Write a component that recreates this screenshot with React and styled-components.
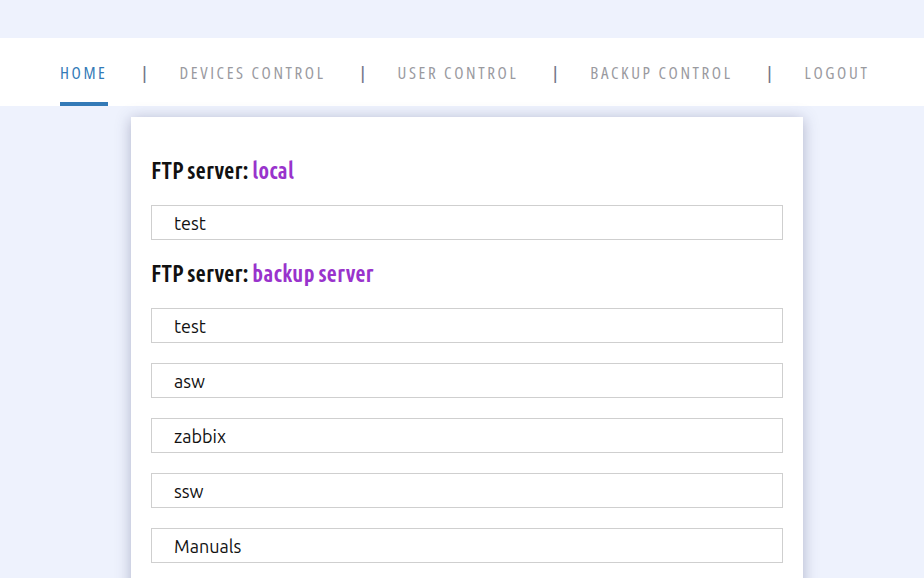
import React from 'react';
import styled, { createGlobalStyle } from 'styled-components';

const GlobalStyle = createGlobalStyle`
  html, body {
    margin: 0;
    padding: 0;
    background: #eef2fd;
    font-family: "Ubuntu", "Open Sans", "Liberation Sans", sans-serif;
  }
`;

const servers = [
  { name: 'local', folders: ['test'] },
  { name: 'backup server', folders: ['test', 'asw', 'zabbix', 'ssw', 'Manuals'] },
];

const navItems = ['HOME', 'DEVICES CONTROL', 'USER CONTROL', 'BACKUP CONTROL', 'LOGOUT'];

const App = () => {
  return (
    <>
      <GlobalStyle />
      <Page>
        <NavBar>
          {navItems.map((item, i) => (
            <React.Fragment key={item}>
              {i > 0 && <Divider>|</Divider>}
              <NavLink active={i === 0}>{item}</NavLink>
            </React.Fragment>
          ))}
        </NavBar>
        <Card>
          {servers.map((server) => (
            <Section key={server.name}>
              <ServerTitle>
                FTP server: <ServerName>{server.name}</ServerName>
              </ServerTitle>
              {server.folders.map((folder, i) => (
                <FolderRow key={folder + i}>{folder}</FolderRow>
              ))}
            </Section>
          ))}
        </Card>
      </Page>
    </>
  );
};

export default App;

const Page = styled.div`
  min-height: 100vh;
  padding-top: 38px;
  box-sizing: border-box;
  overflow: hidden;
`;

const NavBar = styled.nav`
  display: flex;
  align-items: stretch;
  height: 68px;
  padding-left: 60px;
  background: #fff;
`;

const NavLink = styled.a`
  display: flex;
  align-items: center;
  padding-top: 1px;
  box-sizing: border-box;
  white-space: nowrap;
  font-family: "Open Sans", sans-serif;
  font-stretch: 75%;
  font-size: 17px;
  letter-spacing: 2.6px;
  margin-right: -2px;
  color: ${(p) => (p.active ? '#337ab7' : '#9a9a9f')};
  border-bottom: 4px solid ${(p) => (p.active ? '#337ab7' : 'transparent')};
  border-top: 4px solid transparent;
  cursor: pointer;
`;

const Divider = styled.span`
  display: flex;
  align-items: center;
  justify-content: center;
  width: 2px;
  margin: 0 34px 0 38px;
  padding-top: 1px;
  font-family: "Liberation Sans", sans-serif;
  font-size: 19px;
  color: #74788a;
`;

const Card = styled.main`
  width: 672px;
  margin: 11px 0 0 131px;
  min-height: 600px;
  padding: 40px 20px 0;
  box-sizing: border-box;
  background: #fff;
  box-shadow: 0 2px 14px rgba(60, 64, 110, 0.35);
`;

const Section = styled.section`
  display: flex;
  flex-direction: column;
  gap: 20px;
  margin-bottom: 20px;
`;

const ServerTitle = styled.h3`
  margin: 0;
  font-size: 23px;
  font-weight: 600;
  font-stretch: 80%;
  line-height: 28px;
  color: #111;
`;

const ServerName = styled.span`
  color: #9933cc;
`;

const FolderRow = styled.div`
  height: 35px;
  padding-left: 22px;
  display: flex;
  align-items: center;
  box-sizing: border-box;
  border: 1px solid #cfcfcf;
  font-size: 18px;
  font-stretch: 88%;
  color: #111;
`;
